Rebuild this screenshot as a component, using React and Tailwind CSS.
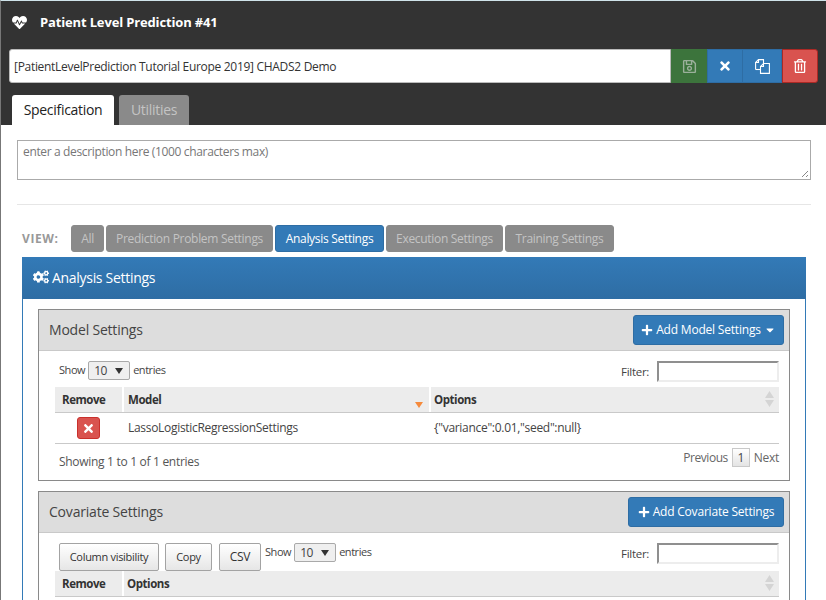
import React from "react";
import { FaHeartbeat, FaRegSave, FaTimes, FaRegTrashAlt, FaCogs, FaPlus, FaCaretDown } from "react-icons/fa";

const F = { fontFamily: '"Open Sans", "Noto Sans", sans-serif' };

function Sort({ active }) {
  return active ? (
    <svg width="10" height="6" viewBox="0 0 10 6" className="absolute right-[5px] bottom-[4px]"><path d="M1 0h8L5 6z" fill="#f58a3c" /></svg>
  ) : (
    <svg width="9" height="17" viewBox="0 0 9 17" className="absolute right-[5px] top-[4px]"><path d="M4.5 0L9 7H0zM0 9h9l-4.500 7z" fill="#d4d4d4" /></svg>
  );
}

function FilesIcon() {
  return (
    <svg width="15" height="15" viewBox="0 0 15 15" fill="none" stroke="#fff" strokeWidth="1.100">
      <path d="M0.600 10.500V3.500L3.500 0.600H8.500V4" />
      <path d="M0.600 10.500H5.500" />
      <path d="M3.500 0.600V3.500H0.600" />
      <path d="M5.500 14.400V7.500L8.500 4.500H14.400V14.400z" fill="#337ab7" />
      <path d="M8.500 4.500V7.500H5.500" />
    </svg>
  );
}

function Select() {
  return (
    <span className="inline-flex items-center justify-between w-[42px] h-[19px] border border-[#a9a9a9] rounded-[2px] bg-[#efefef] pl-[5px] pr-[6px] text-[12px] text-[#444]">
      10
      <svg width="8" height="6" viewBox="0 0 8 6"><path d="M0 0h8L4 6z" fill="#333" /></svg>
    </span>
  );
}

function Filter() {
  return (
    <div className="flex items-center gap-[8px]">
      <span className="text-[11.500px] text-[#444]">Filter:</span>
      <span className="block w-[122px] h-[21px] bg-white border-2 border-t-[#8f8f8f] border-l-[#8f8f8f] border-r-[#ededed] border-b-[#ededed]" />
    </div>
  );
}

function Show() {
  return (
    <span className="flex items-center gap-[3px] text-[11px] tracking-[-0.45px] text-[#444]">
      Show <Select /> entries
    </span>
  );
}

function Th({ w, children, active, sort, grow }) {
  return (
    <div className={`relative h-[25px] flex items-center font-bold text-[11.500px] tracking-[-0.45px] text-[#333] border-r-2 border-white last:border-r-0 ${grow ? "flex-1" : ""} ${w}`}>
      {children}
      {sort && <Sort active={active} />}
    </div>
  );
}

function ToolBtn({ children, w, size }) {
  return (
    <button className={`h-[28px] ${w} ${size} border border-[#a3a3a3] rounded-[2px] bg-gradient-to-b from-white to-[#e6e6e6] text-[#333]`}>{children}</button>
  );
}

function TabBtn({ children, active, w }) {
  return (
    <button className={`h-[27px] rounded-[3px] text-[12px] text-center border ${w} ${active ? "bg-[#337ab7] border-[#2e6da4] text-white" : "bg-[#8a8a8a] border-[#8a8a8a] text-[#c4c4c4]"}`}>{children}</button>
  );
}

function SubHead({ title, h, btn, w, caret }) {
  return (
    <div className={`flex items-center justify-between bg-[#dddddd] border-b border-[#c9c9c9] pl-[10px] pr-[5px] ${h}`}>
      <span className="text-[14px] leading-[20px] text-[#444] tracking-[-0.2px]">{title}</span>
      <button className={`h-[30px] ${w} flex items-center justify-center gap-[3px] rounded-[3px] bg-[#337ab7] border border-[#2e6da4] text-white text-[12px] tracking-[-0.2px]`}>
        <FaPlus className="text-[12px]" />
        {btn}
        {caret && <FaCaretDown className="text-[12px]" />}
      </button>
    </div>
  );
}

export default function App() {
  return (
    <div style={F} className="w-[826px] h-[600px] overflow-hidden bg-white border-l border-[#777] border-t border-t-[#cfe3ea] tracking-[-0.3px]">
      <div className="bg-[#333333] h-[124px] pl-[8px] pr-[8px] pt-[1px] flex flex-col">
        <div className="flex items-center h-[40px] pl-[3px] gap-[13px] text-white">
          <FaHeartbeat className="text-[15px]" />
          <span className="text-[13px] leading-[20px] font-bold tracking-[-0.15px]">Patient Level Prediction #41</span>
        </div>
        <div className="flex h-[34px] mt-[7px]">
          <div className="w-[662px] bg-white border border-[#bbb] rounded-l-[3px] flex items-center pl-[4px] pt-[2px] text-[12px] text-[#333]">
            [PatientLevelPrediction Tutorial Europe 2019] CHADS2 Demo
          </div>
          <div className="w-[36px] bg-[#3c743c] flex items-center justify-center text-[#9bb09b] text-[15px]"><FaRegSave /></div>
          <div className="w-[36px] bg-[#337ab7] border border-[#2e6da4] flex items-center justify-center text-white text-[14px]"><FaTimes /></div>
          <div className="w-[39px] bg-[#337ab7] border border-[#2e6da4] border-l-0 flex items-center justify-center"><FilesIcon /></div>
          <div className="w-[36px] bg-[#d9534f] border border-[#ac2925] rounded-r-[3px] flex items-center justify-center text-white text-[14px]"><FaRegTrashAlt /></div>
        </div>
        <div className="flex gap-[5px] mt-auto pl-[3px]">
          <div className="w-[102px] h-[30px] pt-[5px] leading-[20px] bg-white rounded-t-[3px] text-center text-[14px] text-[#222]">Specification</div>
          <div className="w-[70px] h-[30px] pt-[5px] leading-[20px] bg-[#8a8a8a] rounded-t-[3px] text-center text-[14px] text-[#c4c4c4]">Utilities</div>
        </div>
      </div>

      <div className="pl-[16px] pt-[15px]">
        <div className="relative w-[794px] h-[40px] border border-[#aaaaaa] pl-[5px] pt-[2px] text-[12px] text-[#777] tracking-[-0.35px]">
          enter a description here (1000 characters max)
          <svg width="8" height="8" viewBox="0 0 8 8" className="absolute right-[1px] bottom-[1px]"><path d="M1 7l6-6M5 7l2-2" stroke="#888" /></svg>
        </div>
        <div className="w-[794px] h-px bg-[#e6e6e6] mt-[24px]" />
      </div>

      <div className="flex items-center gap-[2px] pl-[21px] mt-[20px]">
        <span className="text-[12px] font-bold text-[#999] tracking-[0.6px] w-[47px]">VIEW:</span>
        <TabBtn w="w-[33px]">All</TabBtn>
        <TabBtn w="w-[167px]">Prediction Problem Settings</TabBtn>
        <TabBtn w="w-[109px]" active>Analysis Settings</TabBtn>
        <TabBtn w="w-[117px]">Execution Settings</TabBtn>
        <TabBtn w="w-[109px]">Training Settings</TabBtn>
      </div>

      <div className="ml-[21px] mt-[5px] w-[784px] border-x border-[#337ab7] h-[400px]">
        <div className="h-[42px] -mx-px pb-[2px] bg-gradient-to-b from-[#337ab7] to-[#2e6da4] flex items-center gap-[3px] pl-[11px] text-white text-[14px]">
          <FaCogs className="text-[16px]" />
          Analysis Settings
        </div>

        <div className="mx-[15px] mt-[10px] border border-[#8a8a8a] h-[172px]">
          <SubHead title="Model Settings" h="h-[41px]" w="w-[151px]" btn="Add Model Settings" caret />
          <div className="pl-[16px] pr-[10px]">
            <div className="flex items-start justify-between h-[36px] pt-[10px] pl-[4px]">
              <Show />
              <Filter />
            </div>
            <div className="flex bg-[#ececec] border-b border-[#c9c9c9]">
              <Th w="w-[69px] pl-[7px]">Remove</Th>
              <Th w="w-[307px] pl-[4px]" sort active>Model</Th>
              <Th grow w="pl-[3px]" sort>Options</Th>
            </div>
            <div className="flex items-center h-[31px] border-b border-[#c9c9c9] text-[12px] text-[#444]">
              <div className="w-[69px] flex justify-center pr-[2px]">
                <span className="w-[23px] h-[22px] bg-[#d9534f] border border-[#c9302c] rounded-[3px] flex items-center justify-center text-white text-[13px]"><FaTimes /></span>
              </div>
              <div className="w-[307px] pl-[4px]">LassoLogisticRegressionSettings</div>
              <div className="pl-[3px]">{'{"variance":0.01,"seed":null}'}</div>
            </div>
            <div className="flex justify-between pt-[4px] pl-[4px] text-[12px] text-[#555]">
              <span className="mt-[5px]">Showing 1 to 1 of 1 entries</span>
              <div className="flex items-center gap-[4px] h-[19px] text-[#666]">
                <span className="tracking-[-0.45px]">Previous</span>
                <span className="w-[18px] h-[19px] border border-[#c9c9c9] bg-gradient-to-b from-white to-[#e4e4e4] flex items-center justify-center text-[#444]">1</span>
                <span>Next</span>
              </div>
            </div>
          </div>
        </div>

        <div className="mx-[15px] mt-[10px] border border-[#8a8a8a] h-[200px]">
          <SubHead title="Covariate Settings" h="h-[41px]" w="w-[156px]" btn="Add Covariate Settings" />
          <div className="pl-[16px] pr-[10px]">
            <div className="flex items-start justify-between h-[38px] pt-[10px] pl-[4px]">
              <div className="flex items-start">
                <ToolBtn w="w-[100px]" size="text-[11px]">Column visibility</ToolBtn>
                <span className="w-[6px]" />
                <ToolBtn w="w-[47px]" size="text-[11px]">Copy</ToolBtn>
                <span className="w-[7px]" />
                <ToolBtn w="w-[42px]" size="text-[12px]">CSV</ToolBtn>
                <span className="w-[4px]" />
                <Show />
              </div>
              <Filter />
            </div>
            <div className="flex bg-[#ececec] border-b border-[#c9c9c9]">
              <Th w="w-[69px] pl-[7px]">Remove</Th>
              <Th grow w="pl-[3px]" sort>Options</Th>
            </div>
          </div>
        </div>
      </div>
    </div>
  );
}
